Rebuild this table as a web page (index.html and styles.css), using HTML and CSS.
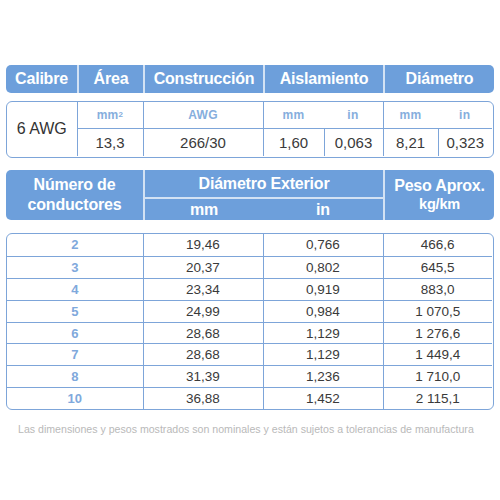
FILE: index.html
```html
<!DOCTYPE html>
<html lang="es">
<head>
<meta charset="utf-8">
<link rel="stylesheet" href="styles.css">
</head>
<body>
<main class="sheet">
  <div class="head head-top">
    <div class="hc">Calibre</div>
    <div class="hc sep">Área</div>
    <div class="hc sep">Construcción</div>
    <div class="hc sep">Aislamiento</div>
    <div class="hc sep">Diámetro</div>
  </div>

  <div class="box spec">
    <div class="cal">6 AWG</div>
    <div class="unit sl">mm<sup>2</sup></div>
    <div class="unit sl">AWG</div>
    <div class="unit sl">mm</div>
    <div class="unit">in</div>
    <div class="unit sl">mm</div>
    <div class="unit">in</div>
    <div class="val sl st">13,3</div>
    <div class="val sl st">266/30</div>
    <div class="val sl st">1,60</div>
    <div class="val sl st">0,063</div>
    <div class="val sl st">8,21</div>
    <div class="val sl st">0,323</div>
  </div>

  <div class="head head-mid">
    <div class="hc num"><div>Número de<br>conductores</div></div>
    <div class="hc sep dext">Diámetro Exterior</div>
    <div class="hc sep hl sub1">mm</div>
    <div class="hc hl sub2">in</div>
    <div class="hc sep peso"><div>Peso Aprox.<br><span class="kg">kg/km</span></div></div>
  </div>

  <div class="box data">
    <div class="n">2</div><div class="d">19,46</div><div class="d">0,766</div><div class="d">466,6</div>
    <div class="n">3</div><div class="d">20,37</div><div class="d">0,802</div><div class="d">645,5</div>
    <div class="n">4</div><div class="d">23,34</div><div class="d">0,919</div><div class="d">883,0</div>
    <div class="n">5</div><div class="d">24,99</div><div class="d">0,984</div><div class="d">1 070,5</div>
    <div class="n">6</div><div class="d">28,68</div><div class="d">1,129</div><div class="d">1 276,6</div>
    <div class="n">7</div><div class="d">28,68</div><div class="d">1,129</div><div class="d">1 449,4</div>
    <div class="n">8</div><div class="d">31,39</div><div class="d">1,236</div><div class="d">1 710,0</div>
    <div class="n">10</div><div class="d">36,88</div><div class="d">1,452</div><div class="d">2 115,1</div>
  </div>

  <p class="note">Las dimensiones y pesos mostrados son nominales y están sujetos a tolerancias de manufactura</p>
</main>
</body>
</html>
```

FILE: styles.css
```css
* { box-sizing: border-box; }
html, body { margin: 0; padding: 0; background: #fff; }
body { font-family: "Liberation Sans", Arial, sans-serif; }

.sheet {
  width: 488px;
  margin-left: 6px;
  padding-top: 65px;
  display: flex;
  flex-direction: column;
}

.head {
  background: #6d9fdb;
  border-radius: 5px;
  color: #fff;
  font-weight: bold;
  font-size: 16px;
  letter-spacing: -0.2px;
  display: grid;
}
.hc {
  display: flex;
  align-items: center;
  justify-content: center;
  text-align: center;
}
.sep { border-left: 2px solid #d3e2f4; }

.head-top {
  height: 28px;
  grid-template-columns: 71px 66px 120px 120px 111px;
}

.box {
  border: 1.5px solid #7da5d9;
  border-radius: 6px;
  display: grid;
}

.spec {
  margin-top: 8px;
  height: 57px;
  grid-template-columns: 69.5px 66px 120px 61px 59px 55px 54.5px;
  grid-template-rows: 26px 28px;
}
.spec > div {
  display: flex;
  align-items: center;
  justify-content: center;
}
.cal {
  grid-row: 1 / span 2;
  font-size: 16px;
  color: #333;
}
.unit {
  color: #86aedd;
  font-weight: bold;
  font-size: 12px;
  letter-spacing: 0.3px;
}
.unit sup { font-size: 8px; position: relative; top: -1px; }
.val {
  font-size: 15px;
  color: #3a3a3a;
}
.sl { border-left: 1.5px solid #7da5d9; }
.st { border-top: 1.5px solid #7da5d9; }

.head-mid {
  margin-top: 12px;
  height: 50px;
  grid-template-columns: 137px 120px 120px 111px;
  grid-template-rows: 27px 23px;
}
.num { grid-row: 1 / span 2; grid-column: 1; line-height: 20px; }
.dext { grid-column: 2 / span 2; grid-row: 1; }
.sub1 { grid-column: 2; grid-row: 2; }
.sub2 { grid-column: 3; grid-row: 2; }
.hl { border-top: 2px solid #d3e2f4; }
.peso { grid-column: 4; grid-row: 1 / span 2; line-height: 18px; }
.kg { font-size: 14.5px; }

.data {
  margin-top: 13px;
  grid-template-columns: 135.5px 120px 120px 109.5px;
  grid-auto-rows: 21.9px;
}
.data > div {
  display: flex;
  align-items: center;
  justify-content: center;
}
.data > div:nth-child(n+5) { border-top: 1.5px solid #7da5d9; }
.data .d { border-left: 1.5px solid #7da5d9; font-size: 13.5px; color: #3a3a3a; }
.data .n { color: #7fa9dc; font-weight: bold; font-size: 13px; }

.note {
  margin: 13px 0 0 12px;
  font-size: 10.6px;
  color: #b9b9b9;
  white-space: nowrap;
}
```
